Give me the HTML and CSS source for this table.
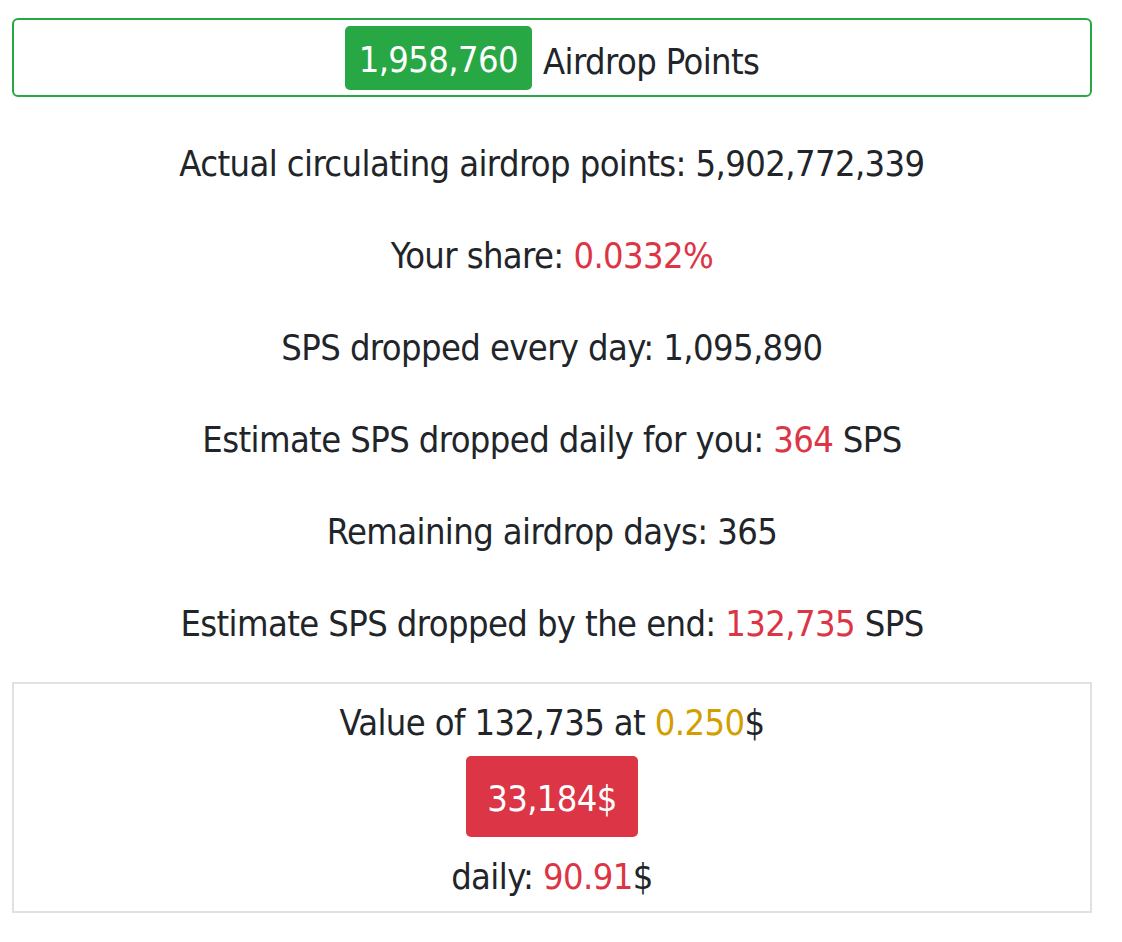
FILE: index.html
```html
<!DOCTYPE html>
<html>
<head>
<meta charset="utf-8">
<link rel="stylesheet" href="styles.css">
</head>
<body>
<div class="page">
  <div class="points-box">
    <span class="badge badge-green">1,958,760</span>
    <span class="points-label">Airdrop Points</span>
  </div>
  <div class="stats">
    <p class="line">Actual circulating airdrop points: 5,902,772,339</p>
    <p class="line">Your share: <span class="red">0.0332%</span></p>
    <p class="line">SPS dropped every day: 1,095,890</p>
    <p class="line">Estimate SPS dropped daily for you: <span class="red">364</span> SPS</p>
    <p class="line">Remaining airdrop days: 365</p>
    <p class="line">Estimate SPS dropped by the end: <span class="red">132,735</span> SPS</p>
  </div>
  <div class="value-box">
    <div class="value-line">Value of 132,735 at <span class="gold">0.250</span>$</div>
    <div class="badge badge-red">33,184$</div>
    <div class="value-line">daily: <span class="red">90.91</span>$</div>
  </div>
</div>
</body>
</html>
```

FILE: styles.css
```css
html, body {
  margin: 0;
  padding: 0;
  background: #ffffff;
}
body {
  font-family: "DejaVu Sans Condensed", "Liberation Sans", sans-serif;
  color: #212529;
  font-size: 36px;
  letter-spacing: -0.6px;
}
.page {
  width: 1080px;
  margin-left: 12px;
  padding-top: 18px;
}
.points-box {
  border: 2px solid #28a745;
  border-radius: 6px;
  height: 75px;
  display: flex;
  align-items: center;
  justify-content: center;
  gap: 11px;
}
.badge {
  display: inline-flex;
  align-items: center;
  justify-content: center;
  color: #ffffff;
  border-radius: 5px;
  box-sizing: border-box;
}
.badge-green {
  background: #28a745;
  height: 64px;
  padding: 4px 14px 0;
}
.points-label {
  color: #212529;
  padding-top: 7px;
}
.stats {
  display: flex;
  flex-direction: column;
  align-items: center;
  padding-top: 44px;
  gap: 46px;
}
.line {
  margin: 0;
  line-height: 46px;
  text-align: center;
}
.red { color: #dc3545; }
.gold { color: #d39e00; }
.value-box {
  margin-top: 35px;
  border: 2px solid #dee2e6;
  height: 231px;
  display: flex;
  flex-direction: column;
  align-items: center;
  padding-top: 16px;
  box-sizing: border-box;
}
.value-line {
  line-height: 46px;
}
.badge-red {
  background: #dc3545;
  height: 81px;
  padding: 4px 21px 0;
  margin-top: 10px;
  margin-bottom: 17px;
}
```
